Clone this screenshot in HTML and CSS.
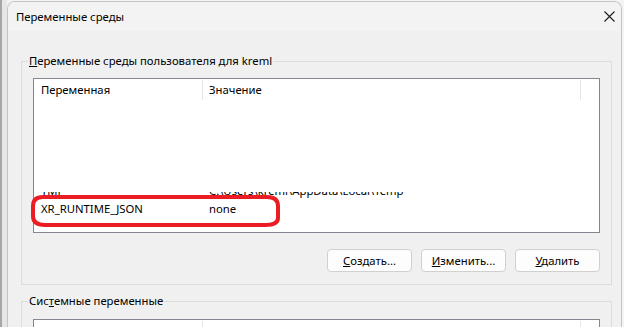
FILE: index.html
```html
<!DOCTYPE html>
<html lang="ru">
<head>
<meta charset="utf-8">
<title>Переменные среды</title>
<link rel="stylesheet" href="styles.css">
</head>
<body>
<div class="desk">
  <div class="behind"><div class="behind-edge"></div></div>
  <div class="window">
    <div class="titlebar">
      <span class="title">Переменные среды</span>
      <svg class="close" width="11" height="11" viewBox="0 0 11 11"><path d="M0.5 0.5 L10.5 10.5 M10.5 0.5 L0.5 10.5" stroke="#1b1b1b" stroke-width="1.1" fill="none"/></svg>
    </div>
    <div class="content">
      <fieldset class="group">
        <legend><u>П</u>еременные среды пользователя для kreml</legend>
        <div class="list">
          <div class="list-head">
            <div class="hcell">Переменная</div>
            <div class="hcell second">Значение</div>
            <div class="hcell last"></div>
          </div>
          <div class="blank"></div>
          <div class="row clipped">
            <div class="row-inner">
              <div class="cell">TMP</div>
              <div class="cell second">C:\Users\kreml\AppData\Local\Temp</div>
            </div>
          </div>
          <div class="row">
            <div class="cell">XR_RUNTIME_JSON</div>
            <div class="cell second">none</div>
          </div>
          <svg class="annot" width="260" height="36" viewBox="0 0 260 36"><path d="M14 3 L238 3 Q249 3 249 12 L249 24 Q249 31 236 31 L16 31 Q4 31 4 22 L4 12 Q4 3 14 3 Z" fill="none" stroke="#ec1c24" stroke-width="4"/></svg>
        </div>
        <div class="buttons">
          <button class="btn"><u>С</u>оздать...</button>
          <button class="btn"><u>И</u>зменить...</button>
          <button class="btn"><u>У</u>далить</button>
        </div>
      </fieldset>
      <fieldset class="group second-group">
        <legend>Сис<u>т</u>емные переменные</legend>
        <div class="list tall">
          <div class="list-head">
            <div class="hcell"></div>
            <div class="hcell second"></div>
            <div class="hcell last"></div>
          </div>
        </div>
      </fieldset>
    </div>
  </div>
</div>
</body>
</html>
```
FILE: styles.css
```css
* { box-sizing: border-box; }
html, body { margin: 0; padding: 0; }
body {
  width: 624px;
  height: 327px;
  overflow: hidden;
  background: #f4f4f4;
  font-family: "Noto Sans", "Segoe UI", sans-serif;
  font-size: 11.3px;
  color: #000;
}
.desk {
  display: flex;
  height: 327px;
  overflow: hidden;
}
.behind {
  width: 7px;
  flex: none;
  background: #e6e6e6;
  display: flex;
}
.behind-edge {
  width: 2px;
  background: #a6a6a6;
}
.window {
  flex: 1;
  margin: 1px 2px 0 0;
  border: 1px solid #c4c4c4;
  border-bottom: none;
  border-radius: 8px 8px 0 0;
  background: #f0f0f0;
  height: 340px;
  overflow: hidden;
}
.titlebar {
  height: 29px;
  background: #f3f3f3;
  display: flex;
  align-items: center;
  justify-content: space-between;
  padding: 0 6px 0 8px;
}
.title {
  font-size: 11.3px;
  line-height: 16px;
  margin-top: 1px;
}
.close { display: block; }
.content {
  padding: 22px 9px 0 13px;
}
.group {
  margin: 0;
  border: 1px solid #dcdcdc;
  padding: 9px 11px 12px 11px;
  min-width: 0;
}
.group legend {
  padding: 0 1px;
  margin-left: -5px;
  line-height: 16px;
  font-size: 11.3px;
}
.second-group {
  margin-top: 8px;
  padding-top: 10px;
}
.list {
  position: relative;
  height: 155px;
  border: 1px solid #828790;
  background: #fff;
}
.list.tall { height: 60px; }
.list-head {
  display: grid;
  grid-template-columns: 169px 378px 1fr;
  height: 22px;
  padding-top: 1px;
}
.hcell {
  height: 20px;
  line-height: 20px;
  padding-left: 7px;
  border-right: 1px solid #e5e5e5;
}
.hcell.second { padding-left: 6px; }
.hcell.last { border-right: none; }
.blank { height: 91px; }
.row {
  display: grid;
  grid-template-columns: 169px 378px;
  height: 18px;
  line-height: 18px;
}
.cell { padding-left: 7px; white-space: nowrap; }
.cell.second { padding-left: 6px; }
.row.clipped {
  display: block;
  height: 8px;
  overflow: hidden;
}
.row-inner {
  display: grid;
  grid-template-columns: 169px 378px;
  height: 18px;
  line-height: 18px;
  margin-top: -10px;
}
.annot {
  position: absolute;
  left: -5px;
  top: 115px;
}
.buttons {
  display: flex;
  justify-content: flex-end;
  gap: 9px;
  margin-top: 16px;
}
.btn {
  width: 85px;
  height: 23px;
  padding: 0;
  border: 1px solid #d0d0d0;
  border-radius: 4px;
  background: #fdfdfd;
  font-family: "Noto Sans", "Segoe UI", sans-serif;
  font-size: 11.3px;
  color: #000;
  line-height: 20px;
}
```
